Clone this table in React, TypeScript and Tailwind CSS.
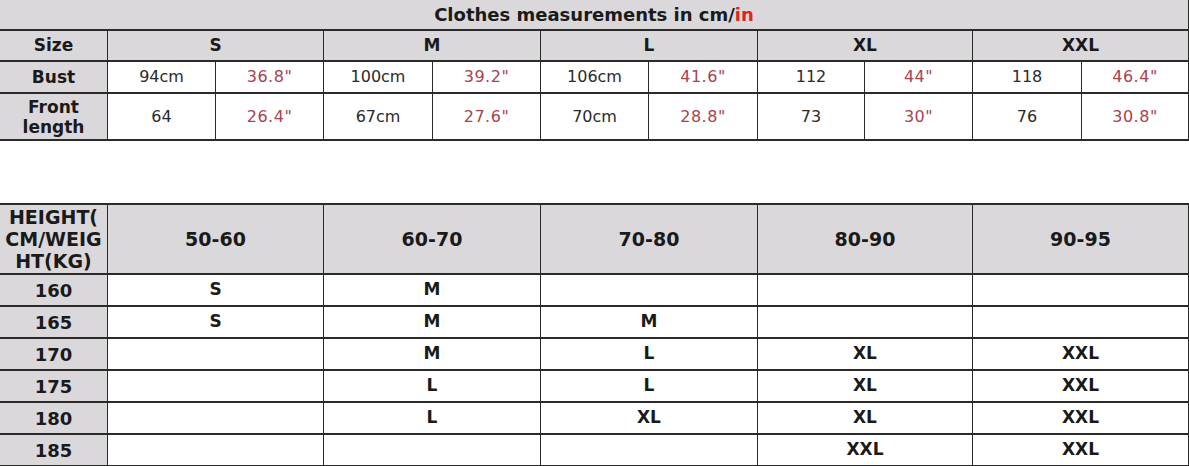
import React from "react";

const GRAY = "bg-[#dbd8dc]";
const FONT = { fontFamily: '"DejaVu Sans", Verdana, sans-serif' };

const subW = [
  "w-[108px]",
  "w-[108px]",
  "w-[109px]",
  "w-[108px]",
  "w-[108px]",
  "w-[109px]",
  "w-[107px]",
  "w-[108px]",
  "w-[109px]",
  "w-[107px]",
];
const groupW = ["w-[216px]", "w-[217px]", "w-[217px]", "w-[215px]", "w-[216px]"];

const sizes = ["S", "M", "L", "XL", "XXL"];
const bust = [
  ["94cm", '36.8"'],
  ["100cm", '39.2"'],
  ["106cm", '41.6"'],
  ["112", '44"'],
  ["118", '46.4"'],
];
const front = [
  ["64", '26.4"'],
  ["67cm", '27.6"'],
  ["70cm", '28.8"'],
  ["73", '30"'],
  ["76", '30.8"'],
];

const weights = ["50-60", "60-70", "70-80", "80-90", "90-95"];
const heightRows: [string, string[]][] = [
  ["160", ["S", "M", "", "", ""]],
  ["165", ["S", "M", "M", "", ""]],
  ["170", ["", "M", "L", "XL", "XXL"]],
  ["175", ["", "L", "L", "XL", "XXL"]],
  ["180", ["", "L", "XL", "XL", "XXL"]],
  ["185", ["", "", "", "XXL", "XXL"]],
];

function Cell({
  w,
  className = "",
  children,
}: {
  w: string;
  className?: string;
  children?: React.ReactNode;
}) {
  return (
    <div
      className={`${w} shrink-0 h-full flex items-center justify-center text-center border-r border-[#2a2a2a] ${className}`}
    >
      {children}
    </div>
  );
}

function MeasureRow({
  label,
  values,
  h,
}: {
  label: React.ReactNode;
  values: string[][];
  h: string;
}) {
  return (
    <div className={`flex ${h} border-b-2 border-[#2a2a2a]`}>
      <Cell w="w-[108px]" className={`${GRAY} font-bold text-[17px] leading-[20px] text-[#1a1a1a]`}>
        {label}
      </Cell>
      {values.map((pair, i) => (
        <React.Fragment key={i}>
          <Cell w={subW[i * 2]} className="bg-white text-[16px] text-[#2a2a2a]">
            {pair[0]}
          </Cell>
          <Cell w={subW[i * 2 + 1]} className="bg-white text-[16px] tracking-[0.5px] text-[#a8434f]">
            {pair[1]}
          </Cell>
        </React.Fragment>
      ))}
    </div>
  );
}

export default function App() {
  return (
    <div className="w-[1189px] h-[466px] bg-white overflow-hidden" style={FONT}>
      {/* Table 1 */}
      <div className="w-[1189px]">
        <div className="flex h-[31px] border-b-2 border-[#2a2a2a]">
          <Cell w="w-[1189px]" className={`${GRAY} font-bold text-[18px] text-[#1a1a1a]`}>
            <span>
              Clothes measurements in cm/<span className="text-[#e0231f]">in</span>
            </span>
          </Cell>
        </div>
        <div className="flex h-[31px] border-b-2 border-[#2a2a2a]">
          <Cell w="w-[108px]" className={`${GRAY} font-bold text-[17px] text-[#1a1a1a]`}>
            Size
          </Cell>
          {sizes.map((s, i) => (
            <Cell key={s} w={groupW[i]} className={`${GRAY} font-bold text-[17px] text-[#1a1a1a]`}>
              {s}
            </Cell>
          ))}
        </div>
        <MeasureRow label="Bust" values={bust} h="h-[32px]" />
        <MeasureRow
          label={
            <span>
              Front
              <br />
              length
            </span>
          }
          values={front}
          h="h-[47px]"
        />
      </div>

      {/* Table 2 */}
      <div className="w-[1189px] mt-[62px] border-t-2 border-[#2a2a2a]">
        <div className="flex h-[70px] border-b-2 border-[#2a2a2a]">
          <Cell w="w-[108px]" className={`${GRAY} font-bold text-[19px] leading-[22px] text-[#1a1a1a]`}>
            <span>
              HEIGHT(
              <br />
              CM/WEIG
              <br />
              HT(KG)
            </span>
          </Cell>
          {weights.map((w, i) => (
            <Cell key={w} w={groupW[i]} className={`${GRAY} font-bold text-[19px] text-[#1a1a1a]`}>
              {w}
            </Cell>
          ))}
        </div>
        {heightRows.map(([hgt, vals]) => (
          <div key={hgt} className="flex h-[32px] border-b-2 border-[#2a2a2a]">
            <Cell w="w-[108px]" className={`${GRAY} font-bold text-[18px] text-[#1a1a1a]`}>
              {hgt}
            </Cell>
            {vals.map((v, i) => (
              <Cell key={i} w={groupW[i]} className="bg-white font-bold text-[17px] text-[#1a1a1a]">
                {v}
              </Cell>
            ))}
          </div>
        ))}
      </div>
    </div>
  );
}
